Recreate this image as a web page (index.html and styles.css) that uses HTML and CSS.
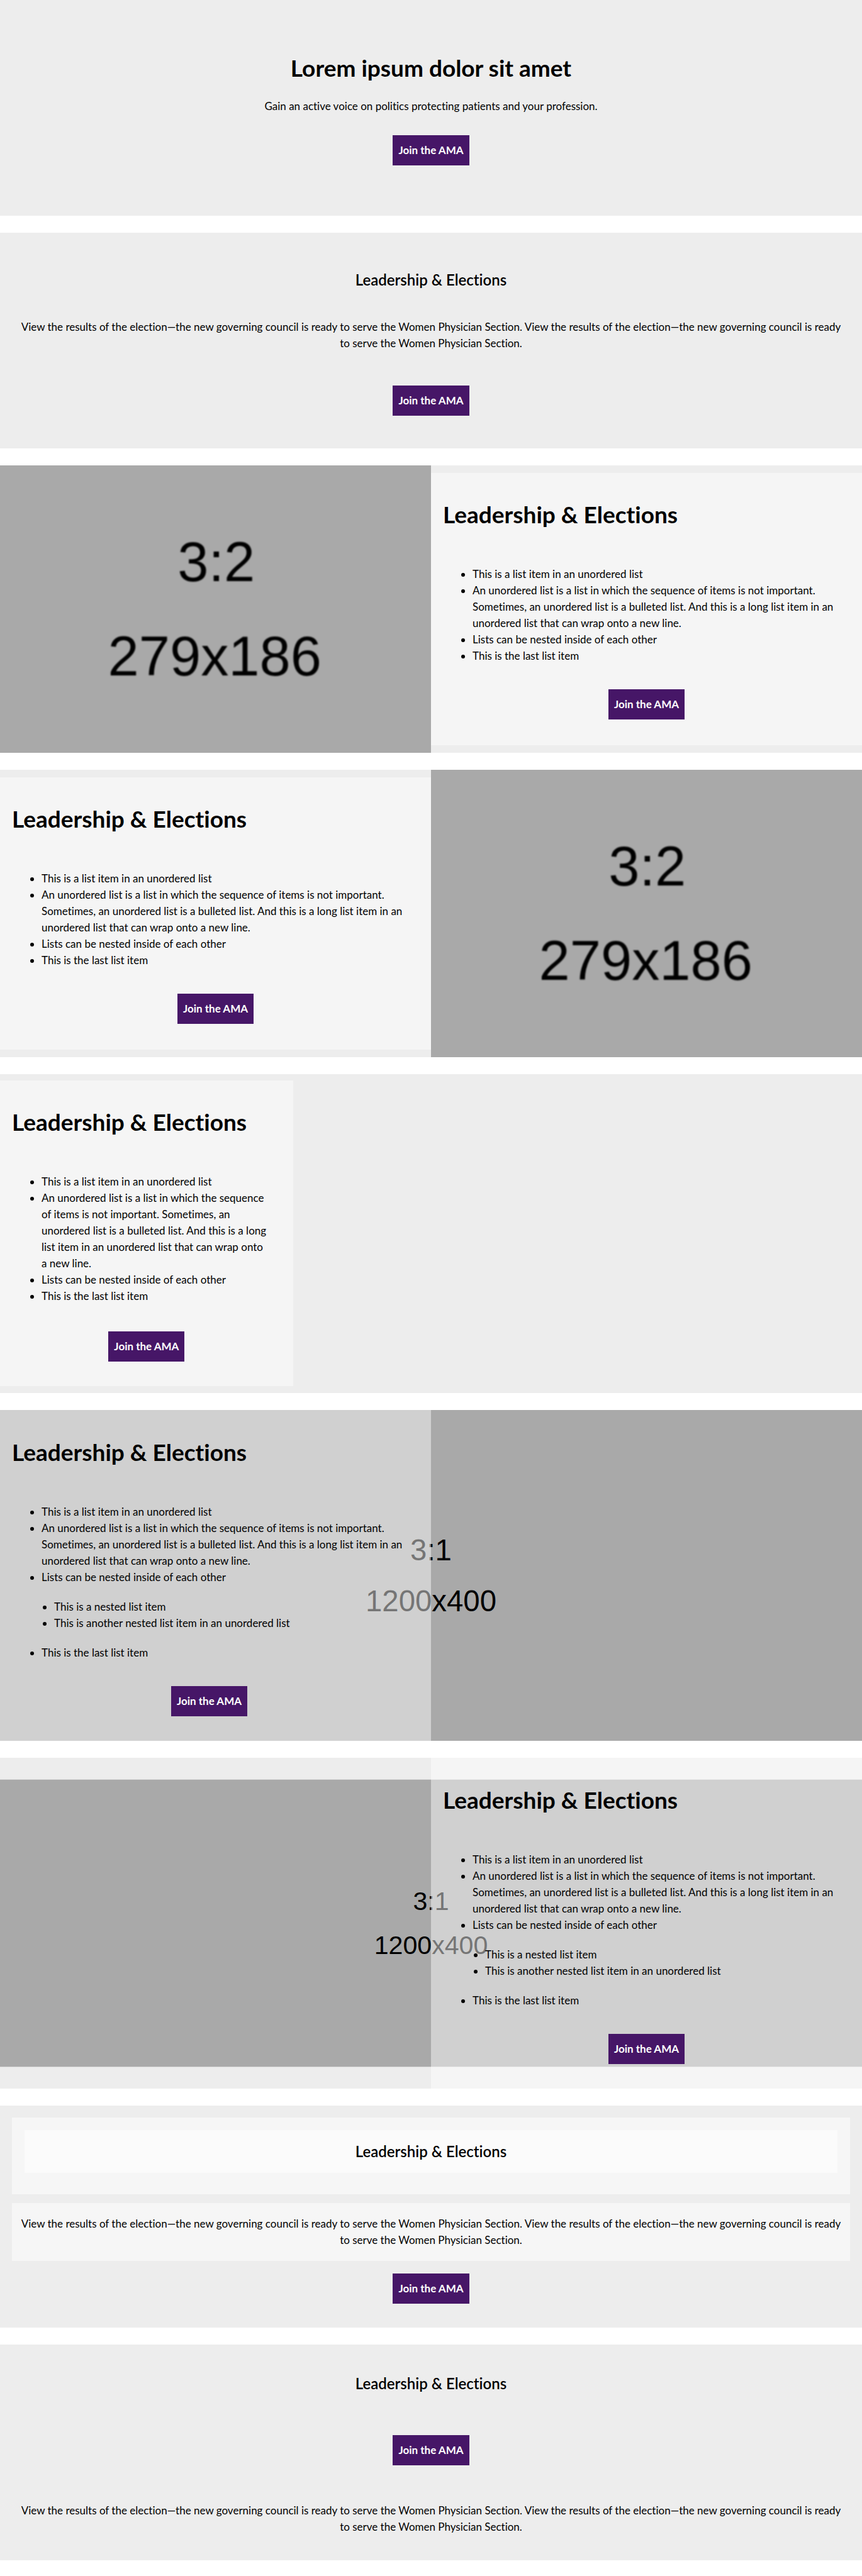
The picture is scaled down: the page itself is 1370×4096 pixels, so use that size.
FILE: index.html
```html
<!DOCTYPE html>
<html lang="en">
<head>
  <meta charset="utf-8">
  <meta name="viewport" content="width=device-width, initial-scale=1">
  <title>Lorem ipsum dolor sit amet</title>
  <link rel="stylesheet" href="styles.css">
</head>
<body>
  <main class="page">

    <section class="band band--hero">
      <h1 class="title">Lorem ipsum dolor sit amet</h1>
      <p class="text">Gain an active voice on politics protecting patients and your profession.</p>
      <a class="button" href="#join">Join the AMA</a>
    </section>

    <section class="band band--message">
      <h2 class="subtitle">Leadership &amp; Elections</h2>
      <p class="text">View the results of the election—the new governing council is ready to serve the Women Physician Section. View the results of the election—the new governing council is ready to serve the Women Physician Section.</p>
      <a class="button" href="#join">Join the AMA</a>
    </section>

    <section class="band split">
      <svg class="media" viewBox="0 0 279 186" preserveAspectRatio="xMidYMid slice" role="img" aria-label="3:2 placeholder">
        <filter id="soft-a"><feGaussianBlur stdDeviation="0.35"/></filter>
        <g filter="url(#soft-a)">
          <text class="media-text" x="140" y="75">3:2</text>
          <text class="media-text" x="139" y="136">279x186</text>
        </g>
      </svg>
      <div class="panel panel--inset">
        <h2 class="title">Leadership &amp; Elections</h2>
        <ul class="list">
          <li>This is a list item in an unordered list</li>
          <li>An unordered list is a list in which the sequence of items is not important. Sometimes, an unordered list is a bulleted list. And this is a long list item in an unordered list that can wrap onto a new line.</li>
          <li>Lists can be nested inside of each other</li>
          <li>This is the last list item</li>
        </ul>
        <a class="button" href="#join">Join the AMA</a>
      </div>
    </section>

    <section class="band split">
      <div class="panel panel--inset">
        <h2 class="title">Leadership &amp; Elections</h2>
        <ul class="list">
          <li>This is a list item in an unordered list</li>
          <li>An unordered list is a list in which the sequence of items is not important. Sometimes, an unordered list is a bulleted list. And this is a long list item in an unordered list that can wrap onto a new line.</li>
          <li>Lists can be nested inside of each other</li>
          <li>This is the last list item</li>
        </ul>
        <a class="button" href="#join">Join the AMA</a>
      </div>
      <svg class="media" viewBox="0 0 279 186" preserveAspectRatio="xMidYMid slice" role="img" aria-label="3:2 placeholder">
        <filter id="soft-b"><feGaussianBlur stdDeviation="0.35"/></filter>
        <g filter="url(#soft-b)">
          <text class="media-text" x="140" y="75">3:2</text>
          <text class="media-text" x="139" y="136">279x186</text>
        </g>
      </svg>
    </section>

    <section class="band third">
      <div class="panel panel--narrow">
        <h2 class="title">Leadership &amp; Elections</h2>
        <ul class="list">
          <li>This is a list item in an unordered list</li>
          <li>An unordered list is a list in which the sequence of items is not important. Sometimes, an unordered list is a bulleted list. And this is a long list item in an unordered list that can wrap onto a new line.</li>
          <li>Lists can be nested inside of each other</li>
          <li>This is the last list item</li>
        </ul>
        <a class="button" href="#join">Join the AMA</a>
      </div>
    </section>

    <section class="band split backed">
      <svg class="backdrop" viewBox="0 0 1200 400" preserveAspectRatio="xMidYMid slice" aria-hidden="true">
        <rect class="backdrop-fill" width="1200" height="400"/>
        <text class="media-text" x="600" y="182">3:1</text>
        <text class="media-text" x="600" y="243">1200x400</text>
      </svg>
      <div class="panel panel--over panel--guttered">
        <h2 class="title">Leadership &amp; Elections</h2>
        <ul class="list">
          <li>This is a list item in an unordered list</li>
          <li>An unordered list is a list in which the sequence of items is not important. Sometimes, an unordered list is a bulleted list. And this is a long list item in an unordered list that can wrap onto a new line.</li>
          <li>Lists can be nested inside of each other
            <ul class="sublist">
              <li>This is a nested list item</li>
              <li>This is another nested list item in an unordered list</li>
            </ul>
          </li>
          <li>This is the last list item</li>
        </ul>
        <a class="button" href="#join">Join the AMA</a>
      </div>
    </section>

    <section class="band split backed">
      <svg class="backdrop" viewBox="0 0 1200 400" preserveAspectRatio="xMidYMid meet" aria-hidden="true">
        <rect class="backdrop-fill" width="1200" height="400"/>
        <text class="media-text" x="600" y="182">3:1</text>
        <text class="media-text" x="600" y="243">1200x400</text>
      </svg>
      <div class="panel panel--over panel--right">
        <h2 class="title">Leadership &amp; Elections</h2>
        <ul class="list">
          <li>This is a list item in an unordered list</li>
          <li>An unordered list is a list in which the sequence of items is not important. Sometimes, an unordered list is a bulleted list. And this is a long list item in an unordered list that can wrap onto a new line.</li>
          <li>Lists can be nested inside of each other
            <ul class="sublist">
              <li>This is a nested list item</li>
              <li>This is another nested list item in an unordered list</li>
            </ul>
          </li>
          <li>This is the last list item</li>
        </ul>
        <a class="button" href="#join">Join the AMA</a>
      </div>
    </section>

    <section class="band band--boxes">
      <div class="box box--heading">
        <div class="box-inner">
          <h2 class="subtitle">Leadership &amp; Elections</h2>
        </div>
      </div>
      <div class="box box--text">
        <p class="text">View the results of the election—the new governing council is ready to serve the Women Physician Section. View the results of the election—the new governing council is ready to serve the Women Physician Section.</p>
      </div>
      <a class="button" href="#join">Join the AMA</a>
    </section>

    <section class="band band--closing">
      <h2 class="subtitle">Leadership &amp; Elections</h2>
      <a class="button" href="#join">Join the AMA</a>
      <p class="text">View the results of the election—the new governing council is ready to serve the Women Physician Section. View the results of the election—the new governing council is ready to serve the Women Physician Section.</p>
    </section>

  </main>
</body>
</html>
```
FILE: styles.css
```css
* {
  box-sizing: border-box;
}

body {
  margin: 0;
  background: #fff;
  color: #000;
  font-family: Lato, "Open Sans", sans-serif;
  font-size: 17px;
  font-variant-ligatures: none;
  line-height: 26px;
}

.page {
  display: flex;
  flex-direction: column;
  gap: 27px;
  padding-bottom: 25px;
}

/* Shared type */

.title,
.subtitle,
.text,
.list,
.sublist {
  margin: 0;
}

.title {
  font-size: 37px;
  font-weight: 700;
  line-height: 44px;
}

.subtitle {
  font-size: 24px;
  font-weight: 600;
  line-height: 30px;
}

.button {
  display: block;
  padding: 0 9px;
  background: #461667;
  color: #fff;
  font-weight: 700;
  line-height: 48px;
  text-decoration: none;
}

/* Bands */

.band {
  background: #ededed;
}

.band--hero,
.band--message,
.band--boxes,
.band--closing {
  display: flex;
  flex-direction: column;
  align-items: center;
  text-align: center;
}

.band--hero {
  padding: 86px 32px 80px;
}

.band--hero .text {
  margin: 26px 0 33px;
}

.band--message {
  padding: 60px 32px 52px;
}

.band--message .text {
  margin: 47px 0 54px;
}

.band--closing {
  padding: 47px 32px 40px;
}

.band--closing .button {
  margin: 67px 0 59px;
}

/* Two columns and one third */

.split {
  display: grid;
  grid-template-columns: 1fr 1fr;
}

.third {
  display: grid;
  grid-template-columns: 34% 1fr;
  padding: 10px 0 11px;
}

.media {
  display: block;
  width: 100%;
  height: 100%;
  background: #a9a9a9;
}

.media-text {
  fill: #000;
  font-family: "Liberation Sans", Arial, sans-serif;
  font-size: 36px;
  text-anchor: middle;
}

.panel {
  display: flex;
  flex-direction: column;
  padding: 44px 0 41px;
  background: rgba(255, 255, 255, 0.46);
}

.panel--inset {
  margin: 12px 0;
}

.panel--narrow {
  padding-bottom: 39px;
}

.panel--over {
  position: relative;
  padding: 45px 0 39px;
}

.panel--guttered {
  padding-right: 20px;
}

.panel--right {
  grid-column: 2;
}

.panel .title {
  padding: 0 19px;
}

.panel .button {
  align-self: center;
  margin-top: 40px;
}

.panel--narrow .button {
  margin-top: 43px;
}

.list {
  margin-top: 60px;
  padding: 0 40px 0 66px;
  list-style: disc;
}

.panel--guttered .list {
  padding-right: 20px;
}

.sublist {
  margin: 21px 0;
  padding-left: 20px;
  list-style: disc;
}

/* Bands with a picture behind the text */

.backed {
  position: relative;
}

.backdrop {
  position: absolute;
  inset: 0;
  width: 100%;
  height: 100%;
}

.backdrop-fill {
  fill: #a9a9a9;
}

/* Nested boxes */

.band--boxes {
  padding: 19px 19px 38px;
}

.box {
  align-self: stretch;
  background: rgba(255, 255, 255, 0.5);
}

.box--heading {
  padding: 20px 20px 34px;
}

.box-inner {
  padding: 19px;
  background: rgba(255, 255, 255, 0.5);
}

.box--text {
  margin: 14px 0 20px;
  padding: 20px 13px;
}
```
